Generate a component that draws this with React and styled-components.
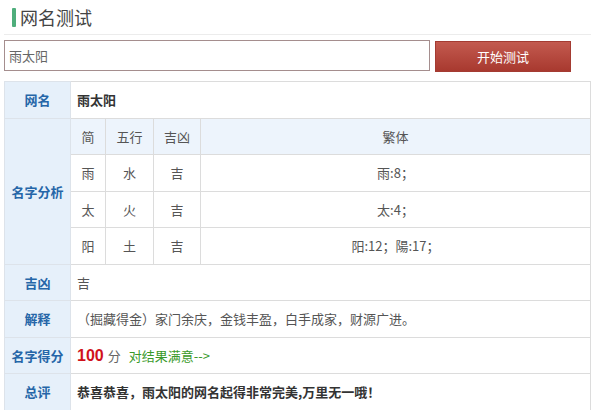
import * as React from 'react';
import styled, { createGlobalStyle } from 'styled-components';

const GlobalStyle = createGlobalStyle`
  html, body {
    margin: 0;
    padding: 0;
    background: #ffffff;
  }
  body {
    font-family: "Noto Sans CJK SC", "Noto Sans", sans-serif;
    font-size: 13px;
    color: #555;
  }
`;

const Page = styled.div`
  width: 600px;
  padding: 0 9px 0 4px;
  box-sizing: border-box;
`;

const TitleBar = styled.div`
  display: flex;
  align-items: center;
  gap: 4px;
  height: 35px;
  padding-left: 8px;
  border-bottom: 1px solid #ececec;
  box-sizing: border-box;
`;

const TitleMark = styled.span`
  display: block;
  width: 4px;
  height: 19px;
  background: #4fae7c;
  border-radius: 1px;
`;

const Title = styled.h1`
  margin: 0;
  font-size: 18px;
  font-weight: 400;
  color: #444;
  line-height: 1;
`;

const SearchRow = styled.div`
  display: flex;
  align-items: center;
  gap: 5px;
  padding-top: 5px;
  height: 45px;
  box-sizing: border-box;
  align-items: flex-start;
`;

const NameInput = styled.input`
  width: 426px;
  height: 31px;
  box-sizing: border-box;
  border: 1px solid #a58e8e;
  padding: 0 4px;
  font-family: inherit;
  font-size: 13px;
  color: #666;
  outline: none;
`;

const TestButton = styled.button`
  width: 136px;
  height: 31px;
  margin-top: 1px;
  border: 1px solid #a43b32;
  background: linear-gradient(#c35a4f, #a8392f);
  color: #fff;
  font-family: inherit;
  font-size: 13px;
  cursor: pointer;
`;

const Table = styled.table`
  width: 587px;
  border-collapse: collapse;
  table-layout: fixed;
  margin-top: 1px;
`;

const Row = styled.tr`
  height: 36.5px;
  background: ${p => (p.$head ? '#edf4fc' : '#fff')};
`;

const Label = styled.th`
  width: 66px;
  background: #e6f0fa;
  color: #2566a8;
  font-weight: 700;
  font-size: 13px;
  border: 1px solid #dde3ea;
  text-align: center;
  padding: 0;
`;

const Cell = styled.td`
  border: 1px solid #dcdcdc;
  padding: 0 ${p => (p.$center ? '0' : '6px')};
  text-align: ${p => (p.$center ? 'center' : 'left')};
  color: ${p => (p.$strong ? '#333' : '#555')};
  font-weight: ${p => (p.$strong ? 700 : 400)};
  white-space: nowrap;
`;

const Score = styled.span`
  color: #d0111b;
  font-weight: 700;
  font-size: 16px;
  font-family: "Liberation Sans", "Noto Sans CJK SC", sans-serif;
`;

const Unit = styled.span`
  color: #666;
  margin: 0 8px 0 4px;
`;

const Feedback = styled.a`
  color: #3a9a2a;
  text-decoration: none;
`;

const chars = [
  { jian: '雨', wx: '水', jx: '吉', fan: '雨:8；' },
  { jian: '太', wx: '火', jx: '吉', fan: '太:4；' },
  { jian: '阳', wx: '土', jx: '吉', fan: '阳:12；陽:17；' },
];

export default function App() {
  return (
    <Page>
      <GlobalStyle />
      <TitleBar>
        <TitleMark />
        <Title>网名测试</Title>
      </TitleBar>
      <SearchRow>
        <NameInput defaultValue="雨太阳" />
        <TestButton>开始测试</TestButton>
      </SearchRow>
      <Table>
        <colgroup>
          <col style={{ width: 66 }} />
          <col style={{ width: 35 }} />
          <col style={{ width: 48 }} />
          <col style={{ width: 47 }} />
          <col />
        </colgroup>
        <tbody>
          <Row>
            <Label>网名</Label>
            <Cell colSpan={4} $strong>雨太阳</Cell>
          </Row>
          <Row $head>
            <Label rowSpan={4}>名字分析</Label>
            <Cell $center>简</Cell>
            <Cell $center>五行</Cell>
            <Cell $center>吉凶</Cell>
            <Cell $center>繁体</Cell>
          </Row>
          {chars.map(c => (
            <Row key={c.jian}>
              <Cell $center>{c.jian}</Cell>
              <Cell $center>{c.wx}</Cell>
              <Cell $center>{c.jx}</Cell>
              <Cell $center>{c.fan}</Cell>
            </Row>
          ))}
          <Row>
            <Label>吉凶</Label>
            <Cell colSpan={4}>吉</Cell>
          </Row>
          <Row>
            <Label>解释</Label>
            <Cell colSpan={4}>（掘藏得金）家门余庆，金钱丰盈，白手成家，财源广进。</Cell>
          </Row>
          <Row>
            <Label>名字得分</Label>
            <Cell colSpan={4}>
              <Score>100</Score>
              <Unit>分</Unit>
              <Feedback href="#">对结果满意--&gt;</Feedback>
            </Cell>
          </Row>
          <Row>
            <Label>总评</Label>
            <Cell colSpan={4} $strong>恭喜恭喜，雨太阳的网名起得非常完美,万里无一哦！</Cell>
          </Row>
        </tbody>
      </Table>
    </Page>
  );
}
